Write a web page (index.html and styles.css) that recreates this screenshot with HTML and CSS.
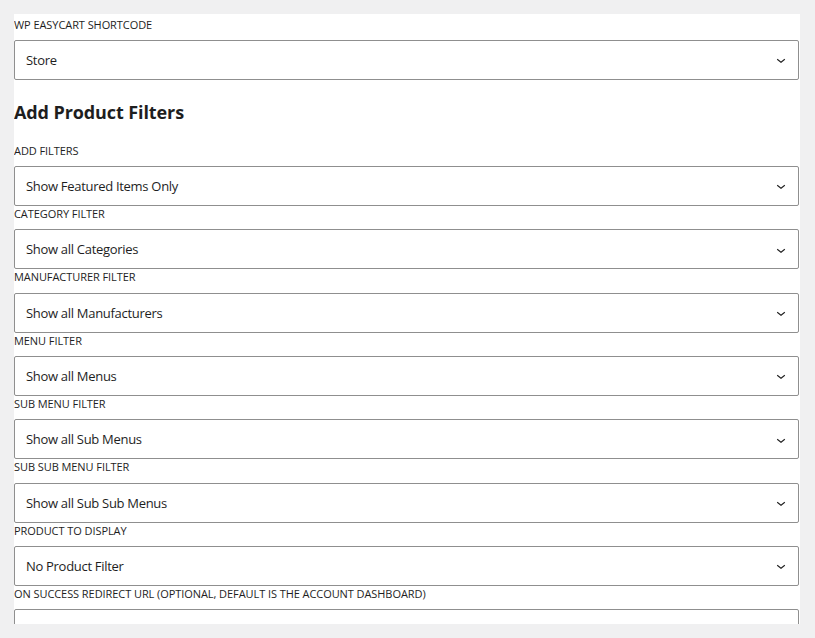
FILE: index.html
```html
<!DOCTYPE html>
<html lang="en">
<head>
<meta charset="utf-8">
<title>Product Filters</title>
<link rel="stylesheet" href="styles.css">
</head>
<body>
<div class="panel">
  <div class="field">
    <label class="label">WP EasyCart Shortcode</label>
    <div class="select"><span class="value">Store</span><svg class="chev" viewBox="0 0 24 24"><path d="M17.5 11.6L12 16l-5.5-4.4.9-1.2L12 14l4.6-3.6 1 1.2z"/></svg></div>
  </div>
  <h2 class="heading">Add Product Filters</h2>
  <div class="field">
    <label class="label">Add Filters</label>
    <div class="select"><span class="value">Show Featured Items Only</span><svg class="chev" viewBox="0 0 24 24"><path d="M17.5 11.6L12 16l-5.5-4.4.9-1.2L12 14l4.6-3.6 1 1.2z"/></svg></div>
  </div>
  <div class="field">
    <label class="label">Category Filter</label>
    <div class="select"><span class="value">Show all Categories</span><svg class="chev" viewBox="0 0 24 24"><path d="M17.5 11.6L12 16l-5.5-4.4.9-1.2L12 14l4.6-3.6 1 1.2z"/></svg></div>
  </div>
  <div class="field">
    <label class="label">Manufacturer Filter</label>
    <div class="select"><span class="value">Show all Manufacturers</span><svg class="chev" viewBox="0 0 24 24"><path d="M17.5 11.6L12 16l-5.5-4.4.9-1.2L12 14l4.6-3.6 1 1.2z"/></svg></div>
  </div>
  <div class="field">
    <label class="label">Menu Filter</label>
    <div class="select"><span class="value">Show all Menus</span><svg class="chev" viewBox="0 0 24 24"><path d="M17.5 11.6L12 16l-5.5-4.4.9-1.2L12 14l4.6-3.6 1 1.2z"/></svg></div>
  </div>
  <div class="field">
    <label class="label">Sub Menu Filter</label>
    <div class="select"><span class="value">Show all Sub Menus</span><svg class="chev" viewBox="0 0 24 24"><path d="M17.5 11.6L12 16l-5.5-4.4.9-1.2L12 14l4.6-3.6 1 1.2z"/></svg></div>
  </div>
  <div class="field">
    <label class="label">Sub Sub Menu Filter</label>
    <div class="select"><span class="value">Show all Sub Sub Menus</span><svg class="chev" viewBox="0 0 24 24"><path d="M17.5 11.6L12 16l-5.5-4.4.9-1.2L12 14l4.6-3.6 1 1.2z"/></svg></div>
  </div>
  <div class="field">
    <label class="label">Product to Display</label>
    <div class="select"><span class="value">No Product Filter</span><svg class="chev" viewBox="0 0 24 24"><path d="M17.5 11.6L12 16l-5.5-4.4.9-1.2L12 14l4.6-3.6 1 1.2z"/></svg></div>
  </div>
  <div class="field">
    <label class="label">On Success Redirect URL (Optional, default is the account dashboard)</label>
    <div class="input"></div>
  </div>
</div>
</body>
</html>
```

FILE: styles.css
```css
html, body {
  margin: 0;
  padding: 0;
}
body {
  background: #f0f0f1;
  font-family: "Open Sans", "Noto Sans", sans-serif;
  color: #1e1e1e;
  height: 638px;
  overflow: hidden;
}
.panel {
  background: #ffffff;
  margin: 14px 15px 0 14px;
  height: 610px;
  overflow: hidden;
  padding: 2.67px 1px 0 0;
  box-sizing: border-box;
}
.field {
  display: flex;
  flex-direction: column;
}
.label {
  display: block;
  font-size: 11px;
  line-height: 15.33px;
  text-transform: uppercase;
  font-weight: 400;
  letter-spacing: -0.07px;
  margin-bottom: 8px;
}
.select, .input {
  height: 40px;
  box-sizing: border-box;
  border: 1px solid #8f8f8f;
  border-radius: 2px;
  display: flex;
  align-items: center;
  padding: 0 8px 0 11px;
  flex-shrink: 0;
}
.value {
  flex: 1;
  font-size: 13px;
  letter-spacing: -0.3px;
}
.chev {
  width: 18px;
  height: 18px;
  fill: #1e1e1e;
  margin-top: 1px;
}
.heading {
  font-size: 18px;
  line-height: 24px;
  font-weight: 700;
  letter-spacing: -0.1px;
  margin: 20px 0 18.67px;
}
```
